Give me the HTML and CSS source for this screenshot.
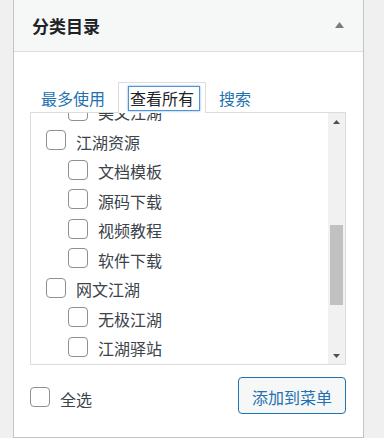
FILE: index.html
```html
<!DOCTYPE html>
<html lang="zh-CN">
<head>
<meta charset="utf-8">
<title>分类目录</title>
<link rel="stylesheet" href="styles.css">
</head>
<body>
<div class="panel">
  <div class="panel-head">
    <h2 class="panel-title">分类目录</h2>
    <svg class="toggle" width="9" height="6" viewBox="0 0 9 6"><polygon points="4.5,0 9,6 0,6" fill="#787c82"/></svg>
  </div>
  <div class="panel-body">
    <ul class="tabs">
      <li class="tab"><a class="tab-link">最多使用</a></li>
      <li class="tab tab-active"><a class="tab-link tab-focus">查看所有</a></li>
      <li class="tab"><a class="tab-link">搜索</a></li>
    </ul>
    <div class="list-box">
      <div class="list-view">
        <ul class="items">
          <li class="item child"><span class="cb"></span><span class="label">美文江湖</span></li>
          <li class="item"><span class="cb"></span><span class="label">江湖资源</span></li>
          <li class="item child"><span class="cb"></span><span class="label">文档模板</span></li>
          <li class="item child"><span class="cb"></span><span class="label">源码下载</span></li>
          <li class="item child"><span class="cb"></span><span class="label">视频教程</span></li>
          <li class="item child"><span class="cb"></span><span class="label">软件下载</span></li>
          <li class="item"><span class="cb"></span><span class="label">网文江湖</span></li>
          <li class="item child"><span class="cb"></span><span class="label">无极江湖</span></li>
          <li class="item child"><span class="cb"></span><span class="label">江湖驿站</span></li>
        </ul>
      </div>
      <div class="scrollbar">
        <div class="sb-btn"><svg width="7" height="4" viewBox="0 0 7 4"><polygon points="3.5,0 7,4 0,4" fill="#505050"/></svg></div>
        <div class="sb-track"><div class="sb-thumb"></div></div>
        <div class="sb-btn"><svg width="7" height="4" viewBox="0 0 7 4"><polygon points="0,0 7,0 3.5,4" fill="#505050"/></svg></div>
      </div>
    </div>
    <div class="actions">
      <label class="select-all"><span class="cb"></span><span class="label">全选</span></label>
      <button class="add-btn" type="button">添加到菜单</button>
    </div>
  </div>
</div>
</body>
</html>
```
FILE: styles.css
```css
html, body {
  margin: 0;
  padding: 0;
}
body {
  background: #f0f0f1;
  font-family: "Noto Sans CJK SC", "Noto Sans", sans-serif;
  color: #3c434a;
  width: 384px;
  height: 438px;
  overflow: hidden;
}
.panel {
  margin-left: 13px;
  width: 351px;
  height: 438px;
  box-sizing: border-box;
  background: #fff;
  border: 1px solid #c3c4c7;
  border-top: none;
}
.panel-head {
  height: 51px;
  border-bottom: 1px solid #dcdcde;
  background: #f6f7f7;
  display: flex;
  align-items: center;
  justify-content: space-between;
  padding: 0 19px 0 18px;
}
.panel-title {
  margin: 0;
  font-size: 17px;
  font-weight: 700;
  line-height: 24px;
  color: #1d2327;
}
.toggle {
  display: block;
  margin-top: -2px;
}
.panel-body {
  padding: 30px 17px 0 16px;
}
.tabs {
  list-style: none;
  margin: 0 0 -1px 0;
  padding: 0;
  display: flex;
  position: relative;
  z-index: 1;
}
.tab {
  border: 1px solid transparent;
  border-bottom: none;
  padding: 4px 10px 0 10px;
  box-sizing: border-box;
  height: 31px;
  margin-right: 2px;
}
.tab-link {
  display: block;
  font-size: 16px;
  line-height: 23px;
  color: #2271b1;
  white-space: nowrap;
}
.tab-active {
  border-color: #dcdcde;
  background: #fff;
  padding-right: 6px;
}
.tab-active .tab-link {
  color: #1d2327;
}
.tab-focus {
  padding: 0 5px 0 1px;
  box-shadow: 0 0 0 1px #4f94d4, 0 0 2px 1px rgba(79, 148, 212, 0.8);
}
.list-box {
  width: 316px;
  height: 253px;
  box-sizing: border-box;
  border: 1px solid #dcdcde;
  display: flex;
  background: #fff;
}
.list-view {
  flex: 1;
  overflow: hidden;
}
.items {
  list-style: none;
  margin: -17.25px 0 0 0;
  padding: 0 0 0 15px;
}
.item {
  height: 29.5px;
  display: flex;
  align-items: center;
}
.item.child {
  padding-left: 22px;
}
.cb {
  display: block;
  flex: none;
  width: 20px;
  height: 20px;
  box-sizing: border-box;
  border: 1px solid #8c8f94;
  border-radius: 4px;
  background: #fff;
}
.label {
  margin-left: 10px;
  font-size: 16px;
  line-height: 22px;
  color: #3c434a;
  white-space: nowrap;
  padding-top: 3px;
}
.scrollbar {
  width: 17px;
  flex: none;
  background: #f1f1f1;
  display: flex;
  flex-direction: column;
}
.sb-btn {
  height: 17px;
  flex: none;
  display: flex;
  align-items: center;
  justify-content: center;
}
.sb-btn svg {
  display: block;
}
.sb-track {
  flex: 1;
  padding: 95px 2px 0 2px;
}
.sb-thumb {
  height: 80px;
  background: #c1c1c1;
}
.actions {
  margin-top: 12px;
  display: flex;
  justify-content: space-between;
  align-items: center;
  width: 316px;
}
.select-all {
  display: flex;
  align-items: center;
  margin-top: 3px;
}
.add-btn {
  width: 108px;
  height: 37px;
  box-sizing: border-box;
  border: 1px solid #2271b1;
  border-radius: 4px;
  background: #f6f7f7;
  color: #2271b1;
  font-family: "Noto Sans CJK SC", "Noto Sans", sans-serif;
  font-size: 16px;
  line-height: 22px;
  padding: 2px 0 0 0;
  text-align: center;
}
```
